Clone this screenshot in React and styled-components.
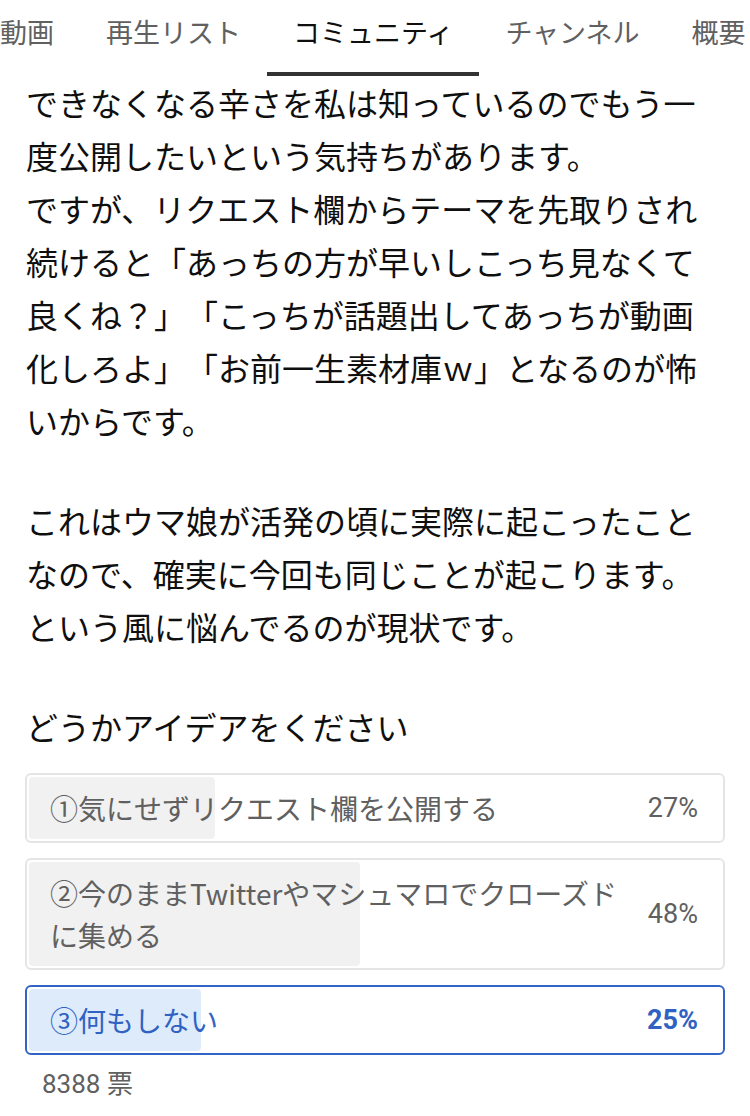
import React from "react";
import styled, { createGlobalStyle } from "styled-components";

const GlobalStyle = createGlobalStyle`
    html, body {
        margin: 0;
        padding: 0;
        background: #ffffff;
    }
    body {
        font-family: "Noto Sans CJK JP", "Noto Sans", sans-serif;
        color: #0f0f0f;
        text-spacing-trim: space-all;
    }
`

const tabs = ["動画", "再生リスト", "コミュニティ", "チャンネル", "概要"]

const paragraphs = [
    [
        "できなくなる辛さを私は知っているのでもう一度公開したいという気持ちがあります。",
        "ですが、リクエスト欄からテーマを先取りされ続けると「あっちの方が早いしこっち見なくて良くね？」「こっちが話題出してあっちが動画化しろよ」「お前一生素材庫ｗ」となるのが怖いからです。",
    ],
    [
        "これはウマ娘が活発の頃に実際に起こったことなので、確実に今回も同じことが起こります。",
        "という風に悩んでるのが現状です。",
    ],
    ["どうかアイデアをください"],
]

const options = [
    { label: "①気にせずリクエスト欄を公開する", percent: 27 },
    { label: "②今のままTwitterやマシュマロでクローズドに集める", percent: 48 },
    { label: "③何もしない", percent: 25, selected: true },
]

const App = () => {
    return (
        <Page>
            <GlobalStyle />
            <TabBar>
                {tabs.map((tab) => (
                    <Tab key={tab} $active={tab === "コミュニティ"}>{tab}</Tab>
                ))}
            </TabBar>
            <Post>
                {paragraphs.map((lines, i) => (
                    <Paragraph key={i}>
                        {lines.map((line) => (
                            <Line key={line}>{line}</Line>
                        ))}
                    </Paragraph>
                ))}
            </Post>
            <Poll>
                {options.map((option) => (
                    <Option key={option.label} $selected={option.selected}>
                        <Fill $selected={option.selected} style={{ width: `${option.percent * 0.99}%` }} />
                        <OptionLabel $selected={option.selected}>{option.label}</OptionLabel>
                        <Percent $selected={option.selected}>{option.percent}%</Percent>
                    </Option>
                ))}
                <Votes>8388 票</Votes>
            </Poll>
        </Page>
    )
}

export default App

const Page = styled.div`
    width: 750px;
    height: 1116px;
    overflow: hidden;
    background: #ffffff;
`

const TabBar = styled.nav`
    display: flex;
    margin-left: -26px;
    height: 76px;
    white-space: nowrap;
`

const Tab = styled.div`
    flex-shrink: 0;
    box-sizing: border-box;
    height: 76px;
    padding: 12px 26px 0;
    line-height: 40px;
    font-size: 27px;
    color: ${({ $active }) => ($active ? "#0f0f0f" : "#606060")};
    border-bottom: 4px solid ${({ $active }) => ($active ? "#333333" : "transparent")};
`

const Post = styled.section`
    padding: 0 26px;
    font-size: 32px;
    line-height: 53px;
    color: #0f0f0f;
`

const Paragraph = styled.div`
    & + & {
        margin-top: 47px;
    }
`

const Line = styled.p`
    margin: 0;
`

const Poll = styled.section`
    display: flex;
    flex-direction: column;
    gap: 15px;
    padding: 20px 25px 0;
`

const Option = styled.div`
    position: relative;
    display: flex;
    align-items: center;
    justify-content: space-between;
    box-sizing: border-box;
    padding: 12px 25px 12px 23px;
    border: 2px solid ${({ $selected }) => ($selected ? "#3064c6" : "#e5e5e5")};
    border-radius: 6px;
`

const Fill = styled.div`
    position: absolute;
    top: 2px;
    bottom: 2px;
    left: 2px;
    border-radius: 4px;
    background: ${({ $selected }) => ($selected ? "#deebfb" : "#f1f1f1")};
`

const OptionLabel = styled.span`
    position: relative;
    flex: 0 1 575px;
    font-size: 28px;
    line-height: 42px;
    color: ${({ $selected }) => ($selected ? "#2f62c2" : "#606060")};
`

const Percent = styled.span`
    position: relative;
    flex-shrink: 0;
    font-family: "Roboto", "Noto Sans CJK JP", sans-serif;
    font-size: 27px;
    font-weight: ${({ $selected }) => ($selected ? 700 : 400)};
    color: ${({ $selected }) => ($selected ? "#2f62c2" : "#606060")};
`

const Votes = styled.div`
    margin-top: -4px;
    padding-left: 17px;
    font-family: "Roboto", "Noto Sans CJK JP", sans-serif;
    font-size: 26px;
    line-height: 36px;
    color: #606060;
`
